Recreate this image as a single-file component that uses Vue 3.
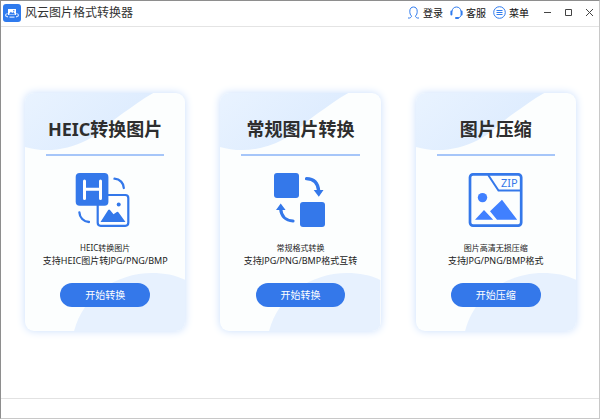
<script setup>
const cards = [
  { id: 'heic', title: 'HEIC转换图片', summary: 'HEIC转换图片', formats: '支持HEIC图片转JPG/PNG/BMP', action: '开始转换' },
  { id: 'convert', title: '常规图片转换', summary: '常规格式转换', formats: '支持JPG/PNG/BMP格式互转', action: '开始转换' },
  { id: 'zip', title: '图片压缩', summary: '图片高清无损压缩', formats: '支持JPG/PNG/BMP格式', action: '开始压缩' },
]
</script>

<template>
  <div class="window">
    <header class="titlebar">
      <svg class="logo" viewBox="0 0 18 18" aria-hidden="true">
        <rect width="18" height="18" rx="3" fill="#2f7bee" />
        <path d="M5 5h8v6H5z" fill="#fff" />
        <path d="M5.8 10.4l2-2.6 1.4 1.3 1.2-1 1.8 2.3z" fill="#2f7bee" />
        <circle cx="10.8" cy="6.8" r=".7" fill="#2f7bee" />
        <path d="M4.6 9.6C1.6 10.6 1.8 12.4 5 12.9M13.4 9.6c3 1 2.8 2.8-.4 3.3M6.5 13.1h5" fill="none" stroke="#cfe2ff" stroke-width="1.1" />
      </svg>
      <h1 class="app-name">风云图片格式转换器</h1>
      <nav class="menu">
        <button type="button" class="menu-item">
          <svg class="menu-icon" viewBox="0 0 13 13" aria-hidden="true">
            <path d="M1 12h1.600c1-.3 2-1 2-2C3.300 9 2.800 7.500 2.800 5.200 2.800 2.600 4.300 1 6.500 1s3.700 1.600 3.700 4.200C10.200 7.500 9.700 9 8.400 10c0 1 1 1.700 2 2H12" />
          </svg>
          登录
        </button>
        <button type="button" class="menu-item">
          <svg class="menu-icon" viewBox="0 0 13 13" aria-hidden="true">
            <path d="M2 5.500C2.200 2.800 4 1 6.500 1S10.800 2.800 11 5.500M11.300 8.500c-.3 2-1.600 3.200-3.300 3.500" />
            <path d="M1.400 5.500v3M11.600 5.500v3M6 12h2" stroke-width="2" stroke-linecap="round" />
          </svg>
          客服
        </button>
        <button type="button" class="menu-item">
          <svg class="menu-icon" viewBox="0 0 13 13" aria-hidden="true">
            <circle cx="6.500" cy="6.500" r="5.800" />
            <path d="M3.500 4.500h6M3.500 6.500h6M3.500 8.500h6" />
          </svg>
          菜单
        </button>
      </nav>
      <div class="controls">
        <button type="button" class="control" aria-label="最小化">
          <svg viewBox="0 0 9 9"><path d="M1 4.500h7" /></svg>
        </button>
        <button type="button" class="control" aria-label="最大化">
          <svg viewBox="0 0 9 9"><path d="M1.500 1.500h6v6h-6z" /></svg>
        </button>
        <button type="button" class="control" aria-label="关闭">
          <svg viewBox="0 0 9 9"><path d="M1 1l7 7M8 1L1 8" /></svg>
        </button>
      </div>
    </header>

    <main class="content">
      <section v-for="card in cards" :key="card.id" class="card">
        <svg class="backdrop" viewBox="0 0 160 238" preserveAspectRatio="none" aria-hidden="true">
          <defs>
            <linearGradient :id="'tint-' + card.id" x1="0" y1="0" x2="1" y2="0.500">
              <stop offset="0" stop-color="#e9f3ff" />
              <stop offset="1" stop-color="#dcebfe" />
            </linearGradient>
          </defs>
          <path d="M0 0H128C117 6 107 14 98 20C86 28 76 40 62 47C43 57 20 60 0 54Z" :fill="`url(#tint-${card.id})`" />
          <path d="M49 238C58 203 90 180 127 180C139 180 150 182 160 187V238Z" fill="#e7f1fe" />
        </svg>
        <h2 class="title">{{ card.title }}</h2>
        <div class="rule"></div>

        <svg v-if="card.id === 'heic'" class="icon" viewBox="0 0 60 54" aria-hidden="true">
          <rect x="22.700" y="22" width="30.600" height="30.800" rx="3" fill="#fff" stroke="#3478ea" stroke-width="2.200" />
          <circle cx="43.700" cy="31.400" r="2" fill="#3478ea" />
          <path d="M25.500 49L33.200 37q.9-1.200 1.800 0L38.500 41.200 41.800 39q.9-.7 1.600.2L50.500 49z" fill="#3478ea" />
          <rect x=".7" width="32.700" height="32.700" rx="4" fill="#3478ea" />
          <path d="M9.500 8v17.500M25.500 8v17.500M9.500 16.300h16" fill="none" stroke="#fff" stroke-width="3" stroke-linecap="round" />
          <path d="M39.500 5.700C45 6 48.600 10 48.800 15M4.400 39.500C4.600 44.500 8.500 48.800 14 49" fill="none" stroke="#3478ea" stroke-width="2.300" stroke-linecap="round" />
        </svg>

        <svg v-else-if="card.id === 'convert'" class="icon" viewBox="0 0 60 54" aria-hidden="true">
          <rect x="4" width="25" height="25" rx="3" fill="#3478ea" />
          <rect x="30" y="29" width="25" height="25" rx="3" fill="#3478ea" />
          <path d="M36.500 5.700C43.500 5.800 48 10 48.700 18M23 48C15.500 47.600 11.200 43 10.700 36" fill="none" stroke="#3478ea" stroke-width="3.200" stroke-linecap="round" />
          <path d="M43.700 17h9.800l-4.700 6.700zM6 37h9.600l-4.900-6.500z" fill="#3478ea" />
        </svg>

        <svg v-else class="icon" viewBox="0 0 60 54" aria-hidden="true">
          <rect x="4" y="1.400" width="51.200" height="51.200" rx="3" fill="none" stroke="#3478ea" stroke-width="2.700" />
          <path d="M22.200 2L32.500 17.500H55" fill="none" stroke="#3478ea" stroke-width="2" />
          <text class="zip-label" x="35" y="14">ZIP</text>
          <circle cx="16.500" cy="24.600" r="4.700" fill="#4080ff" />
          <path d="M9 46.800L18 37l9.200 9.800zM36 26.700L51.200 46.800H31L24 38.200z" fill="#4080ff" />
        </svg>

        <p class="desc">
          <span class="summary">{{ card.summary }}</span>
          <span class="formats">{{ card.formats }}</span>
        </p>
        <button type="button" class="action">{{ card.action }}</button>
      </section>
    </main>

    <footer class="statusbar"></footer>
  </div>
</template>

<style>
body {
  margin: 0;
}
</style>

<style scoped>
.window {
  display: flex;
  flex-direction: column;
  box-sizing: border-box;
  min-height: 100vh;
  border: 1px solid #c8c8c8;
  border-top-color: #8e8e8e;
  border-left-color: #8e8e8e;
  background: #fff;
  color: #222;
  font-family: "Noto Sans", "Noto Sans CJK SC", sans-serif;
}

button {
  margin: 0;
  padding: 0;
  border: 0;
  background: none;
  color: inherit;
  font: inherit;
  cursor: pointer;
}

.titlebar {
  display: flex;
  align-items: center;
  box-sizing: border-box;
  height: 26px;
  padding: 0 5px 2px 2px;
  border-bottom: 1px solid #e4e4e4;
}

.logo {
  width: 18px;
  height: 18px;
}

.app-name {
  flex: 1;
  margin: 0 0 0 4px;
  font-size: 12px;
  font-weight: 400;
  line-height: 18px;
  color: #333;
}

.menu {
  display: flex;
  gap: 7px;
}

.menu-item {
  display: flex;
  align-items: center;
  gap: 3px;
  font-size: 10px;
  line-height: 16px;
  color: #111;
}

.menu-icon {
  width: 13px;
  height: 13px;
  fill: none;
  stroke: #2f7bee;
}

.controls {
  display: flex;
  gap: 12px;
  margin-left: 14px;
}

.control {
  display: flex;
}

.control svg {
  width: 9px;
  height: 9px;
  fill: none;
  stroke: #444;
}

.content {
  display: grid;
  flex: 1;
  grid-template-columns: repeat(3, 1fr);
  align-items: start;
  gap: 35px;
  padding: 66px 23px 24px 24px;
}

.card {
  position: relative;
  display: flex;
  flex-direction: column;
  align-items: center;
  padding: 25px 0 24px;
  border-radius: 9px;
  background: #fcfefe;
  box-shadow: 0 0 8px #c9defc;
  overflow: hidden;
}

.backdrop {
  position: absolute;
  inset: 0;
  width: 100%;
  height: 100%;
}

.title,
.rule,
.icon,
.desc,
.action {
  position: relative;
}

.title {
  margin: 0;
  font-size: 18px;
  font-weight: 700;
  line-height: 22px;
  white-space: nowrap;
  color: #2e2e2e;
}

.rule {
  width: 74%;
  height: 2px;
  margin-top: 14px;
  background: #a6c6f9;
}

.icon {
  width: 60px;
  height: 54px;
  margin-top: 17px;
}

.zip-label {
  fill: #3478ea;
  font-size: 11px;
}

.desc {
  display: flex;
  flex-direction: column;
  margin: 14px 0 16px;
  line-height: 13px;
  text-align: center;
  white-space: nowrap;
}

.summary {
  font-size: 8px;
}

.formats {
  font-size: 9px;
}

.action {
  width: 56%;
  height: 24px;
  border-radius: 12px;
  background: #3478ea;
  color: #fff;
  font-size: 10px;
  line-height: 24px;
}

.statusbar {
  height: 19px;
  border-top: 1px solid #e2e2e2;
}
</style>
